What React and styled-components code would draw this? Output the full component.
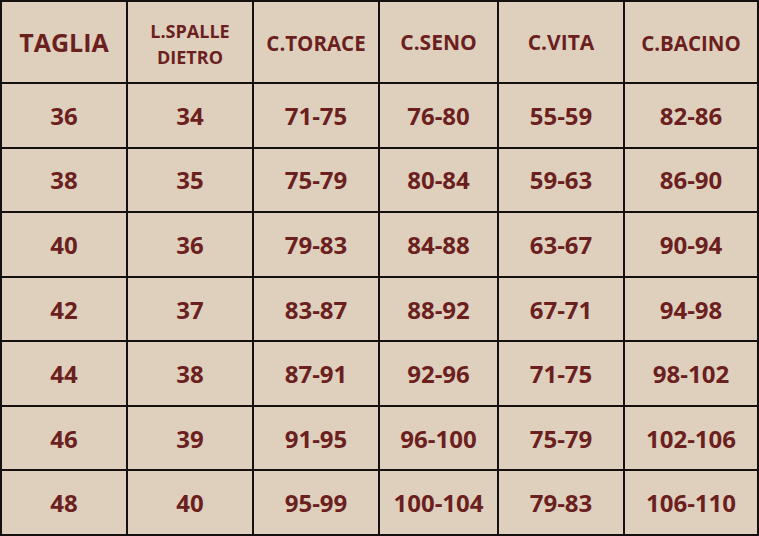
import React from "react";
import styled, { createGlobalStyle } from "styled-components";

const Global = createGlobalStyle`
  html, body { margin: 0; padding: 0; background: #dfd0bd; }
  body { font-family: "Open Sans", "DejaVu Sans", sans-serif; }
`;

const Grid = styled.div`
  width: 759px;
  height: 536px;
  box-sizing: border-box;
  padding: 2px;
  background: #141010;
  display: grid;
  grid-template-columns: 124px 124px 124px 117px 124px 132px;
  grid-template-rows: 80px repeat(7, 1fr);
  gap: 2px;
`;

const Cell = styled.div`
  background: #dfd0bd;
  color: #6b1f1f;
  font-weight: 700;
  display: flex;
  align-items: center;
  justify-content: center;
  text-align: center;
  white-space: pre-line;
  font-size: ${(p) => p.$size || 24}px;
  line-height: ${(p) => p.$lh || 1.2};
  padding-top: ${(p) => p.$pt || 0}px;
`;

const headers = [
  { t: "TAGLIA", size: 25 },
  { t: "L.SPALLE\nDIETRO", size: 18, lh: "26px", pt: 4 },
  { t: "C.TORACE", size: 20.5, pt: 2 },
  { t: "C.SENO", size: 21, pt: 2 },
  { t: "C.VITA", size: 21, pt: 2 },
  { t: "C.BACINO", size: 20.5, pt: 2 },
];

const rows = [
  ["36", "34", "71-75", "76-80", "55-59", "82-86"],
  ["38", "35", "75-79", "80-84", "59-63", "86-90"],
  ["40", "36", "79-83", "84-88", "63-67", "90-94"],
  ["42", "37", "83-87", "88-92", "67-71", "94-98"],
  ["44", "38", "87-91", "92-96", "71-75", "98-102"],
  ["46", "39", "91-95", "96-100", "75-79", "102-106"],
  ["48", "40", "95-99", "100-104", "79-83", "106-110"],
];

export default function App() {
  return (
    <>
      <Global />
      <Grid>
        {headers.map((h, i) => (
          <Cell key={"h" + i} $size={h.size} $lh={h.lh} $pt={h.pt}>
            {h.t}
          </Cell>
        ))}
        {rows.map((r, ri) =>
          r.map((v, ci) => (
            <Cell key={ri + "-" + ci} $pt={2}>
              {v}
            </Cell>
          ))
        )}
      </Grid>
    </>
  );
}
